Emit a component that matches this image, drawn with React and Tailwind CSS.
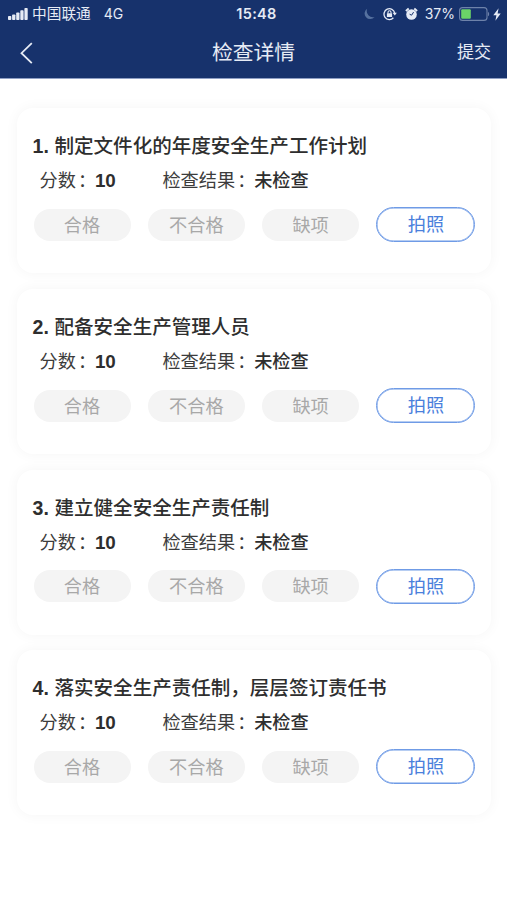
import React from "react";

const items = [
  { id: 1, title: "制定文件化的年度安全生产工作计划", score: 10, result: "未检查" },
  { id: 2, title: "配备安全生产管理人员", score: 10, result: "未检查" },
  { id: 3, title: "建立健全安全生产责任制", score: 10, result: "未检查" },
  { id: 4, title: "落实安全生产责任制，层层签订责任书", score: 10, result: "未检查" },
];

const options = ["合格", "不合格", "缺项"];

const StatusBar = () => {
  return (
    <div className="relative flex h-[28px] items-center justify-between pl-[8px] pr-[6px] text-[#e6ebf5] font-['Inter','Noto_Sans_CJK_SC',sans-serif]">
      <div className="flex items-center">
        <svg width="20" height="12" viewBox="0 0 20 12" fill="currentColor">
          <rect x="0" y="8" width="3.3" height="4" rx="0.8" />
          <rect x="4.1" y="6.5" width="3.3" height="5.5" rx="0.8" />
          <rect x="8.2" y="4.5" width="3.3" height="7.5" rx="0.8" />
          <rect x="12.3" y="2.3" width="3.3" height="9.7" rx="0.8" />
          <rect x="16.4" y="0" width="3.3" height="12" rx="0.8" />
        </svg>
        <span className="ml-[4px] text-[14.7px] leading-[20px]">中国联通</span>
        <span className="ml-[13px] text-[14px] leading-[20px]">4G</span>
      </div>

      <span className="absolute left-1/2 -translate-x-1/2 ml-[3px] text-[14.5px] font-semibold leading-[20px] tracking-[0.3px]">
        15:48
      </span>

      <div className="flex items-center">
        {/* do not disturb */}
        <svg className="text-[#56719f]" width="11" height="12" viewBox="0 0 11 12" fill="currentColor">
          <path d="M3.2 0.8A5.6 5.6 0 1 0 10.6 9A6.2 6.2 0 0 1 3.2 0.8Z" />
        </svg>
        {/* rotation lock */}
        <svg className="ml-[8px]" width="14" height="14" viewBox="0 0 14 14" fill="none" stroke="currentColor" strokeWidth="1.3">
          <path d="M11.7 6A5.4 5.4 0 1 0 10.4 10.8" />
          <path d="M9.6 5.7H13.9L11.8 8.4Z" fill="currentColor" stroke="none" />
          <rect x="3.9" y="6.2" width="5.2" height="3.8" rx="0.5" fill="currentColor" stroke="none" />
          <path d="M5 6.4V5.2A1.5 1.5 0 0 1 8 5.2V6.4" strokeWidth="1.1" />
        </svg>
        {/* alarm */}
        <svg className="ml-[8px]" width="13" height="14" viewBox="0 0 13 14" fill="none" stroke="currentColor">
          <circle cx="6.5" cy="7.5" r="5.3" fill="currentColor" stroke="none" />
          <path d="M0.9 3.9L3.7 1.6M12.1 3.9L9.3 1.6" strokeWidth="2" />
          <path d="M8.6 5.1L6.6 8.2L4.6 7.2" stroke="#17326c" strokeWidth="1" />
        </svg>
        <span className="ml-[7px] text-[14px] leading-[20px]">37%</span>
        <svg className="ml-[4px]" width="31" height="14" viewBox="0 0 31 14" fill="none">
          <rect x="0.6" y="0.6" width="27.4" height="12.8" rx="3" stroke="#6e82aa" strokeWidth="1.1" />
          <rect x="2.2" y="2.2" width="9.6" height="9.6" rx="1" fill="#6bd468" />
          <path d="M29 4.7C30.6 5.4 30.6 8.6 29 9.3Z" fill="#6e82aa" />
        </svg>
        <svg className="ml-[3px]" width="8" height="13" viewBox="0 0 8 13" fill="currentColor">
          <path d="M5.6 0.3L0.3 7.3H3.4L2.4 12.7L7.7 5.4H4.6Z" />
        </svg>
      </div>
    </div>
  );
};

const NavBar = () => {
  return (
    <div className="relative flex h-[49px] items-center justify-between pl-[20px] pr-[16px] text-[#e6ebf5]">
      <svg width="13" height="22" viewBox="0 0 13 22" fill="none" stroke="currentColor" strokeWidth="1.8">
        <path d="M11.8 1.2L1.5 11.2L11.8 21.2" />
      </svg>
      <h1 className="absolute left-1/2 -translate-x-1/2 text-[20.8px] leading-[30px] whitespace-nowrap">检查详情</h1>
      <button className="text-[17px] leading-[24px]">提交</button>
    </div>
  );
};

const CheckCard = ({ item }) => {
  return (
    <div className="h-[165px] rounded-[16px] bg-white pl-[16px] pt-[25px] shadow-[0_0_14px_rgba(0,0,0,0.045)]">
      <h2 className="flex h-[26px] items-center text-[19.55px] leading-[26px] text-[#2e2e2e] whitespace-nowrap">
        <span className="w-[22px] font-bold">{item.id}.</span>
        <span className="font-medium">{item.title}</span>
      </h2>
      <div className="mt-[9px] flex h-[26px] items-center pl-[7px] text-[18.2px] leading-[26px] text-[#3c3c3c]">
        <span>分数</span>
        <span className="ml-[2px] w-[17px]">：</span>
        <span className="w-[67.5px] text-[18.8px] font-bold text-[#2e2e2e]">{item.score}</span>
        <span>检查结果</span>
        <span className="ml-[2px] w-[17px]">：</span>
        <span className="font-medium text-[#2e2e2e]">{item.result}</span>
      </div>
      <div className="mt-[13px] flex h-[35px] items-center gap-[17.3px] pl-[1px] text-[18.2px]">
        {options.map((opt) => (
          <button key={opt} className="h-[32px] w-[97px] rounded-full bg-[#f4f4f4] pt-[1px] leading-[32px] text-[#a8a8a8]">
            {opt}
          </button>
        ))}
        <button className="h-[35px] w-[99px] rounded-full border-[1.5px] border-[#6f9be6] pt-[1px] leading-[32px] text-[#4a80dc] shadow-[inset_0_0_0_0.5px_#6f9be6]">
          拍照
        </button>
      </div>
    </div>
  );
};

const App = () => {
  return (
    <div className="h-[900px] w-[507px] overflow-hidden bg-white font-['Liberation_Sans','Noto_Sans_CJK_SC',sans-serif]">
      <header className="h-[79px] border-b border-[#8f9fc4] bg-[#17326c]">
        <StatusBar />
        <NavBar />
      </header>
      <main className="flex flex-col gap-[15.7px] px-[16.5px] pt-[29.4px]">
        {items.map((item) => (
          <CheckCard key={item.id} item={item} />
        ))}
      </main>
    </div>
  );
};

export default App;
